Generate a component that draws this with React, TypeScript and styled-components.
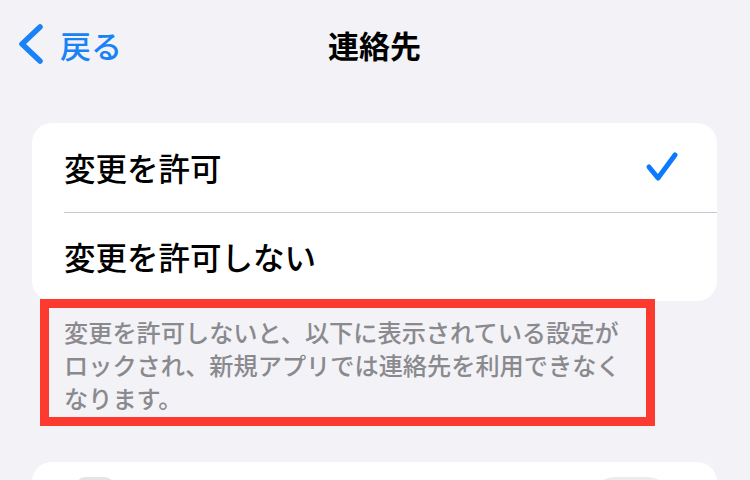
import React, { FC } from "react";
import styled, { createGlobalStyle } from "styled-components";

const GlobalStyle = createGlobalStyle`
  html, body {
    margin: 0;
    padding: 0;
    background: #f2f2f7;
  }

  body {
    font-family: "Noto Sans CJK JP", "Noto Sans", sans-serif;
    -webkit-font-smoothing: antialiased;
  }
`;

const Page = styled.div`
  width: 750px;
  height: 480px;
  overflow: hidden;
  background: #f2f2f7;
  padding: 0 33px 0 32px;
  box-sizing: border-box;
`;

const NavBar = styled.header`
  height: 88px;
  margin: 0 -32px;
  padding: 0 18px;
  display: grid;
  grid-template-columns: 1fr auto 1fr;
  align-items: center;
`;

const BackButton = styled.a`
  display: inline-flex;
  align-items: center;
  gap: 16px;
  color: #1a82f7;
  font-size: 31px;
  font-weight: 500;
  text-decoration: none;
  justify-self: start;
`;

const NavTitle = styled.h1`
  margin: 0;
  font-size: 31px;
  font-weight: 700;
  color: #000;
`;

const Group = styled.section<{ $top: number }>`
  margin-top: ${(p) => p.$top}px;
  background: #fff;
  border-radius: 20px;
  overflow: hidden;
`;

const Row = styled.div`
  height: 89px;
  padding: 0 38px 2px 32px;
  box-sizing: border-box;
  display: flex;
  align-items: center;
  justify-content: space-between;
  font-size: 31.5px;
  font-weight: 500;
  color: #000;

  & + & {
    border-top: 1px solid #c8c8cc;
    margin-left: 32px;
    padding-left: 0;
  }
`;

const Footer = styled.p`
  margin: -2px 0 0 8px;
  width: 615px;
  height: 127px;
  box-sizing: border-box;
  border: 9px solid #fd3a30;
  padding: 7px 18px 0 15px;
  font-size: 24.2px;
  line-height: 33px;
  font-weight: 500;
  color: #8a8a8e;
`;

const PeekRow = styled.div`
  height: 89px;
  padding: 15px 46px 0 42px;
  display: flex;
  align-items: flex-start;
  justify-content: space-between;
`;

const AppIcon = styled.div`
  width: 42px;
  height: 58px;
  border-radius: 12px;
  background: #e4e4e8;
`;

const Toggle = styled.div`
  width: 80px;
  height: 48px;
  border-radius: 24px;
  background: #ececee;
`;

const Chevron: FC = () => (
  <svg width="26" height="40" viewBox="0 0 26 40">
    <path
      d="M22 3 L4 20 L22 37"
      fill="none"
      stroke="#1a82f7"
      strokeWidth="5.5"
      strokeLinecap="round"
      strokeLinejoin="round"
    />
  </svg>
);

const Check: FC = () => (
  <svg width="34" height="32" viewBox="0 0 34 32">
    <path
      d="M4 16 L13 27 L30 4"
      fill="none"
      stroke="#0a7aff"
      strokeWidth="5"
      strokeLinecap="round"
      strokeLinejoin="round"
    />
  </svg>
);

const App: FC = () => {
  return (
    <>
      <GlobalStyle />
      <Page>
        <NavBar>
          <BackButton href="#">
            <Chevron />
            戻る
          </BackButton>
          <NavTitle>連絡先</NavTitle>
          <span />
        </NavBar>

        <Group $top={35}>
          <Row>
            変更を許可
            <Check />
          </Row>
          <Row>変更を許可しない</Row>
        </Group>

        <Footer>
          変更を許可しないと、以下に表示されている設定がロックされ、新規アプリでは連絡先を利用できなくなります。
        </Footer>

        <Group $top={36}>
          <PeekRow>
            <AppIcon />
            <Toggle />
          </PeekRow>
        </Group>
      </Page>
    </>
  );
};

export default App;
